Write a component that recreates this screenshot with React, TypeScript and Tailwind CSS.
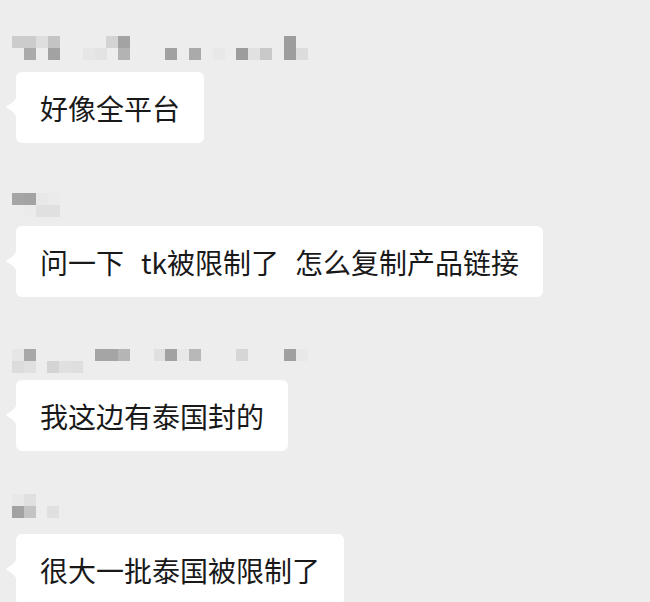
import React from 'react'

type Cell = [number, number, string]

interface Message {
  id: number
  parts: string[]
  nameTop: number
  name: Cell[]
}

const messages: Message[] = [
  {
    id: 1,
    parts: ['好像全平台'],
    nameTop: 4,
    name: [
      [12, 0, '#cccccc'], [24, 0, '#cccccc'], [36, 0, '#dedede'], [48, 0, '#c4c4c4'],
      [106, 0, '#d4d4d4'], [118, 0, '#a3a3a3'], [284, 0, '#9d9d9d'],
      [24, 1, '#aaaaaa'], [48, 1, '#a2a2a2'], [83, 1, '#e6e6e6'], [95, 1, '#e3e3e3'],
      [118, 1, '#b3b3b3'], [165, 1, '#a1a1a1'], [189, 1, '#aaaaaa'], [213, 1, '#e8e8e8'],
      [236, 1, '#9c9c9c'], [248, 1, '#e1e1e1'], [260, 1, '#c9c9c9'], [284, 1, '#9d9d9d'],
      [296, 1, '#dcdcdc'],
    ],
  },
  {
    id: 2,
    // two spaces between the parts in the original message
    parts: ['问一下', 'tk被限制了', '怎么复制产品链接'],
    nameTop: 7,
    name: [
      [12, 0, '#a5a5a5'], [24, 0, '#a3a3a3'], [36, 0, '#e8e8e8'], [48, 0, '#ebebeb'],
      [24, 1, '#ebebeb'], [36, 1, '#e0e0e0'], [48, 1, '#e0e0e0'],
    ],
  },
  {
    id: 3,
    parts: ['我这边有泰国封的'],
    nameTop: 9,
    name: [
      [12, 0, '#e6e6e6'], [24, 0, '#a8a8a8'], [95, 0, '#a5a5a5'], [107, 0, '#a5a5a5'],
      [118, 0, '#b5b5b5'], [154, 0, '#e0e0e0'], [165, 0, '#a2a2a2'], [177, 0, '#e8e8e8'],
      [189, 0, '#b8b8b8'], [236, 0, '#d6d6d6'], [284, 0, '#a0a0a0'], [296, 0, '#e8e8e8'],
      [12, 1, '#dcdcdc'], [24, 1, '#e0e0e0'], [47, 1, '#d4d4d4'], [59, 1, '#e0e0e0'],
      [71, 1, '#dedede'],
    ],
  },
  {
    id: 4,
    parts: ['很大一批泰国被限制了'],
    nameTop: 0,
    name: [
      [12, 0, '#e8e8e8'], [24, 0, '#e0e0e0'],
      [12, 1, '#a2a2a2'], [24, 1, '#c4c4c4'], [47, 1, '#e0e0e0'],
    ],
  },
]

// pixelated (mosaic) sender name
function BlurredName({ cells, top }: { cells: Cell[]; top: number }) {
  return (
    <svg width="320" height="40" viewBox="0 0 320 40" className="block">
      {cells.map(([x, row, fill], i) => (
        <rect key={i} x={x} y={top + row * 12} width="12" height="12" fill={fill} />
      ))}
    </svg>
  )
}

function Bubble({ parts }: { parts: string[] }) {
  return (
    <div className="relative ml-4 w-fit">
      <svg
        width="11"
        height="28"
        viewBox="0 0 11 28"
        className="absolute -left-[10px] top-[21px]"
      >
        <path d="M11 0 C11 7 6 10 1 13 C0 13.6 0 14.4 1 15 C6 18 11 21 11 28 Z" fill="#ffffff" />
      </svg>
      <div className="flex h-[71px] items-center whitespace-pre rounded-md bg-white px-6 text-[28px] leading-none text-[#191919]">
        {parts.map((p, i) => (
          <React.Fragment key={i}>
            {i === 1 && <span className="inline-block w-[17px]" />}
            {i === 2 && <span className="inline-block w-[16px]" />}
            <span>{p}</span>
          </React.Fragment>
        ))}
      </div>
    </div>
  )
}

export default function App() {
  return (
    <div
      className="h-[602px] w-[650px] overflow-hidden bg-[#ededed] pt-8"
      style={{ fontFamily: '"Noto Sans CJK SC", "Noto Sans", sans-serif' }}
    >
      <div className="flex flex-col gap-[43px]">
        {messages.map((m) => (
          <div key={m.id} className="flex flex-col">
            <BlurredName cells={m.name} top={m.nameTop} />
            <Bubble parts={m.parts} />
          </div>
        ))}
      </div>
    </div>
  )
}
